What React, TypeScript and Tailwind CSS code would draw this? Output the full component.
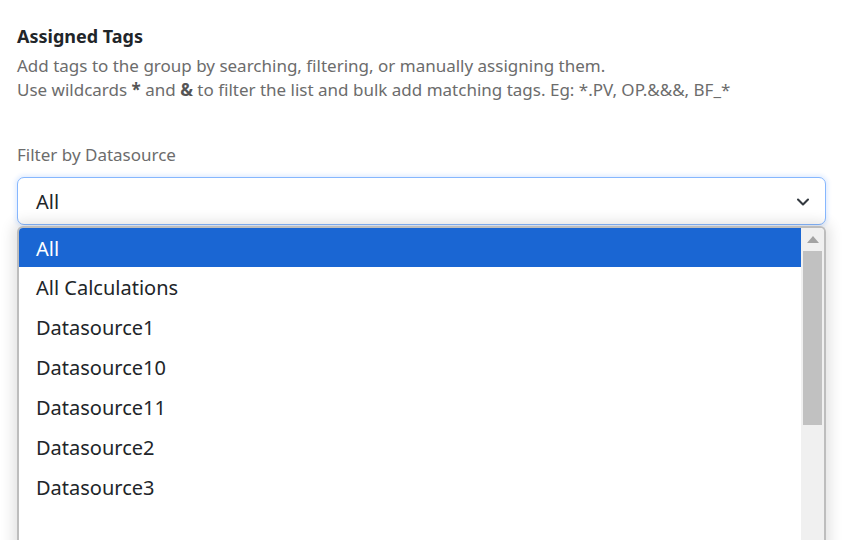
import { ChevronDown } from "lucide-react"

const OPTIONS = [
  "All",
  "All Calculations",
  "Datasource1",
  "Datasource10",
  "Datasource11",
  "Datasource2",
  "Datasource3",
]

export default function App() {
  return (
    <div
      className="relative h-[540px] w-[860px] overflow-hidden bg-white px-[17px] pt-[25px] text-[#212529]"
      style={{ fontFamily: '"Noto Sans", "Open Sans", sans-serif' }}
    >
      <h3 className="text-[18px] font-bold leading-[22px] text-[#212529]">Assigned Tags</h3>
      <p className="mt-[7px] text-[17px] leading-[24px] text-[#6c6c6c]">
        Add tags to the group by searching, filtering, or manually assigning them.
        <br />
        Use wildcards <b className="text-[#555]">*</b> and <b className="text-[#555]">&amp;</b> to filter the list and
        bulk add matching tags. Eg: *.PV, OP.&amp;&amp;&amp;, BF_*
      </p>

      <div className="mt-[42px]">
        <label className="block text-[17px] leading-[22px] text-[#6c6c6c]">Filter by Datasource</label>
        <div className="relative mt-[11px]">
          <div className="flex h-[48px] w-[809px] items-center justify-between rounded-[7px] border border-[#86b7fe] bg-white pl-[18px] pr-[12px] pt-[2px] text-[20px] shadow-[0_0_4px_2px_rgba(13,110,253,0.12)]">
            <span>All</span>
            <ChevronDown className="h-5 w-5 text-[#343a40]" strokeWidth={2.5} />
          </div>

          {/* covered fields behind the open list */}
          <div className="mt-[34px] h-[52px] w-[809px] rounded-[7px] border border-[#dee2e6]" />

          {/* open dropdown list */}
          <div className="absolute left-0 top-[49px] flex h-[330px] w-[809px] overflow-hidden rounded-t-[6px] border-x-2 border-t-2 border-[#bdbdbd] bg-white shadow-[0_0_14px_4px_rgba(0,0,0,0.12)]">
            <ul className="flex-1">
              {OPTIONS.map((o, i) => (
                <li
                  key={o}
                  className={
                    i === 0
                      ? "flex h-[39px] items-center bg-[#1a66d3] pl-[17px] pt-[2px] text-[20px] text-white"
                      : "flex h-[40px] items-center pl-[17px] pt-[2px] text-[20px] text-[#212529]"
                  }
                >
                  {o}
                </li>
              ))}
            </ul>
            <div className="flex w-[23px] flex-col bg-[#f0f0f0]">
              <div className="flex h-[23px] items-center justify-center">
                <svg width="12" height="7" viewBox="0 0 12 7">
                  <path d="M6 0 L12 7 L0 7 Z" fill="#a3a3a3" />
                </svg>
              </div>
              <div className="mx-[2px] h-[174px] bg-[#c1c1c1]" />
            </div>
          </div>
        </div>
      </div>
    </div>
  )
}
